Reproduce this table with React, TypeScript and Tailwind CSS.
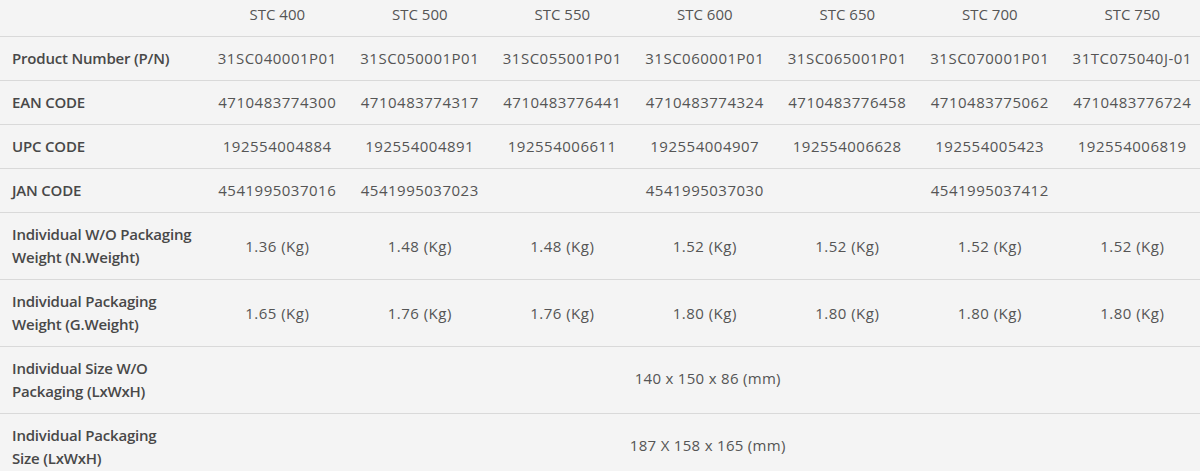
import React from 'react';

const models = ['STC 400', 'STC 500', 'STC 550', 'STC 600', 'STC 650', 'STC 700', 'STC 750'];

type Row = { label: React.ReactNode; values?: string[]; merged?: string };

const rows: Row[] = [
  {
    label: 'Product Number (P/N)',
    values: ['31SC040001P01', '31SC050001P01', '31SC055001P01', '31SC060001P01', '31SC065001P01', '31SC070001P01', '31TC075040J-01'],
  },
  {
    label: 'EAN CODE',
    values: ['4710483774300', '4710483774317', '4710483776441', '4710483774324', '4710483776458', '4710483775062', '4710483776724'],
  },
  {
    label: 'UPC CODE',
    values: ['192554004884', '192554004891', '192554006611', '192554004907', '192554006628', '192554005423', '192554006819'],
  },
  {
    label: 'JAN CODE',
    values: ['4541995037016', '4541995037023', '', '4541995037030', '', '4541995037412', ''],
  },
  {
    label: <>Individual W/O Packaging<br />Weight (N.Weight)</>,
    values: ['1.36 (Kg)', '1.48 (Kg)', '1.48 (Kg)', '1.52 (Kg)', '1.52 (Kg)', '1.52 (Kg)', '1.52 (Kg)'],
  },
  {
    label: <>Individual Packaging<br />Weight (G.Weight)</>,
    values: ['1.65 (Kg)', '1.76 (Kg)', '1.76 (Kg)', '1.80 (Kg)', '1.80 (Kg)', '1.80 (Kg)', '1.80 (Kg)'],
  },
  {
    label: <>Individual Size W/O<br />Packaging (LxWxH)</>,
    merged: '140 x 150 x 86 (mm)',
  },
  {
    label: <>Individual Packaging<br />Size (LxWxH)</>,
    merged: '187 X 158 x 165 (mm)',
  },
];

export default function App() {
  return (
    <div className="w-[1200px] h-[471px] overflow-hidden bg-[#f4f4f4] font-['Open_Sans',sans-serif] text-[15px] leading-[23px]">
      <div className="grid grid-cols-[206px_repeat(7,142.5px)] w-[1203.5px]">
        {/* header */}
        <div className="h-[37px] border-b border-[#d9d9d9]" />
        {models.map((m) => (
          <div key={m} className="h-[37px] border-b border-[#d9d9d9] pt-[3px] text-center text-[#555] whitespace-nowrap">
            {m}
          </div>
        ))}

        {rows.map((row, i) => (
          <React.Fragment key={i}>
            <div className="border-b border-[#d9d9d9] py-[10px] pl-3 font-semibold text-[#484848] tracking-[-0.2px] whitespace-nowrap flex items-center">
              <span>{row.label}</span>
            </div>
            {row.merged ? (
              <div className="col-span-7 border-b border-[#d9d9d9] flex items-center justify-center pl-[6px] pb-[3px] text-[#555] tracking-[0.3px]">
                {row.merged}
              </div>
            ) : (
              row.values!.map((v, j) => (
                <div
                  key={j}
                  className="border-b border-[#d9d9d9] flex items-center justify-center text-[#555] whitespace-nowrap tracking-[0.5px]"
                >
                  {v}
                </div>
              ))
            )}
          </React.Fragment>
        ))}
      </div>
    </div>
  );
}
